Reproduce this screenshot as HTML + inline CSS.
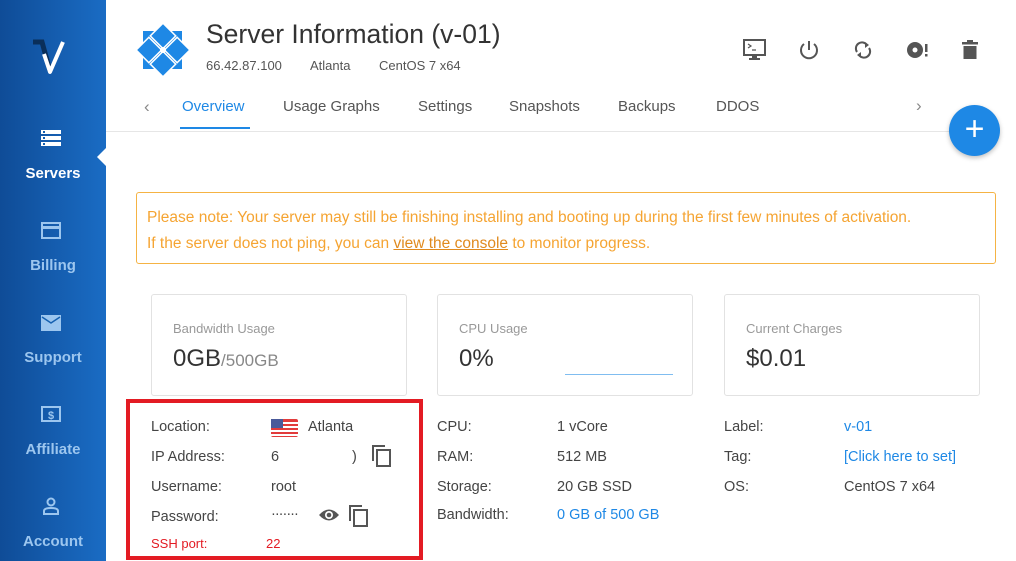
<!DOCTYPE html>
<html><head><meta charset="utf-8"><style>
*{margin:0;padding:0;box-sizing:border-box}
body{width:1016px;height:561px;overflow:hidden;background:#fff;font-family:"Liberation Sans",sans-serif;position:relative;color:#333}
.sb{position:absolute;left:0;top:0;width:106px;height:561px;background:linear-gradient(90deg,#0f4c97,#1a6cc4)}
.nav{position:absolute;left:0;width:106px;text-align:center;font-weight:bold;font-size:15px;color:#9cc6ef}
.a{position:absolute;white-space:nowrap}
.tab{position:absolute;top:98px;font-size:15px;color:#555}
.card{position:absolute;top:294px;width:256px;height:102px;border:1px solid #e2e2e2;border-radius:3px}
.card .l{position:absolute;left:21px;top:26px;font-size:13px;color:#999}
.card .v{position:absolute;left:21px;top:50px;font-size:24px;color:#333}
.lb{position:absolute;font-size:14.5px;color:#444}
.bl{color:#1e88e5}
</style></head><body>
<div class="sb"></div>
<svg class="a" style="left:30px;top:38px" width="44" height="40" viewBox="0 0 44 40"><path d="M3 4 L12 4 L20 33" fill="none" stroke="#0a2f5a" stroke-width="5"/><path d="M14 16 L20 34 L33 4" fill="none" stroke="#fff" stroke-width="4" stroke-linejoin="round"/></svg>
<svg class="a" style="left:41px;top:130px" width="20" height="17"><rect x="0" y="0" width="20" height="4" fill="#fff"/><rect x="0" y="6" width="20" height="4" fill="#fff"/><rect x="0" y="12" width="20" height="4" fill="#fff"/><rect x="2" y="1" width="2" height="2" fill="#1560b0"/><rect x="2" y="7" width="2" height="2" fill="#1560b0"/><rect x="2" y="13" width="2" height="2" fill="#1560b0"/></svg>
<div class="nav" style="top:165px;color:#fff">Servers</div>
<div class="a" style="left:97px;top:148px;width:0;height:0;border-top:9px solid transparent;border-bottom:9px solid transparent;border-right:9px solid #fff"></div>
<svg class="a" style="left:41px;top:222px" width="20" height="17"><rect x="1" y="1" width="18" height="15" fill="none" stroke="#9cc6ef" stroke-width="2"/><rect x="1" y="4" width="18" height="3" fill="#9cc6ef"/></svg>
<div class="nav" style="top:257px">Billing</div>
<svg class="a" style="left:41px;top:315px" width="20" height="16"><rect width="20" height="16" fill="#9cc6ef"/><path d="M1 2 L10 8 L19 2" fill="none" stroke="#1560b0" stroke-width="1.5"/></svg>
<div class="nav" style="top:349px">Support</div>
<svg class="a" style="left:41px;top:406px" width="20" height="16"><rect x="1" y="1" width="18" height="14" fill="none" stroke="#9cc6ef" stroke-width="2"/><text x="10" y="13" font-size="11" font-weight="bold" text-anchor="middle" fill="#9cc6ef" font-family="Liberation Sans">$</text></svg>
<div class="nav" style="top:441px">Affiliate</div>
<svg class="a" style="left:42px;top:497px" width="18" height="18"><circle cx="9" cy="5" r="3.5" fill="none" stroke="#9cc6ef" stroke-width="2"/><path d="M2 17 V14 Q2 11 9 11 Q16 11 16 14 V17 Z" fill="none" stroke="#9cc6ef" stroke-width="2"/></svg>
<div class="nav" style="top:533px">Account</div>

<svg class="a" style="left:136px;top:23px" width="54" height="54" viewBox="0 0 54 54"><rect x="7" y="8" width="39" height="38" fill="#1e88e5"/><g transform="rotate(45 27 27)" stroke="#fff" stroke-width="1.5" fill="#1e88e5"><rect x="8" y="8" width="18" height="18"/><rect x="28" y="8" width="18" height="18"/><rect x="8" y="28" width="18" height="18"/><rect x="28" y="28" width="18" height="18"/></g><circle cx="27" cy="27" r="3" fill="#fff"/></svg>
<div class="a" style="left:206px;top:19px;font-size:26.5px;color:#333">Server Information (v-01)</div>
<div class="a" style="left:206px;top:58px;font-size:13px;color:#555">66.42.87.100</div>
<div class="a" style="left:310px;top:58px;font-size:13px;color:#555">Atlanta</div>
<div class="a" style="left:379px;top:58px;font-size:13px;color:#555">CentOS 7 x64</div>

<svg class="a" style="left:742px;top:38px" width="26" height="24"><rect x="2" y="2" width="21" height="15" fill="none" stroke="#555" stroke-width="2"/><path d="M6 6 L9 8 L6 10 M10 12 H14" stroke="#555" stroke-width="1.2" fill="none"/><rect x="10" y="17" width="5" height="3" fill="#555"/><rect x="7" y="20" width="11" height="2" fill="#555"/></svg>
<svg class="a" style="left:797px;top:38px" width="24" height="24"><path d="M7 6 A8 8 0 1 0 17 6" fill="none" stroke="#555" stroke-width="2"/><path d="M12 3 V12" stroke="#555" stroke-width="2"/></svg>
<svg class="a" style="left:851px;top:38px" width="24" height="24"><path d="M6 14 A6 6 0 0 1 16 7 M18 10 A6 6 0 0 1 8 17" fill="none" stroke="#555" stroke-width="2"/><path d="M14 4 L18 7 L14 10Z M10 14 L6 17 L10 20Z" fill="#555"/></svg>
<svg class="a" style="left:905px;top:38px" width="24" height="24"><circle cx="10" cy="12" r="8" fill="#555"/><circle cx="10" cy="12" r="2.5" fill="#fff"/><rect x="20" y="6" width="2.5" height="8" fill="#555"/><rect x="20" y="16" width="2.5" height="2.5" fill="#555"/></svg>
<svg class="a" style="left:958px;top:38px" width="24" height="24"><rect x="4" y="4" width="16" height="2.5" fill="#555"/><rect x="9" y="2" width="6" height="2" fill="#555"/><path d="M5.5 8 H18.5 V21 H5.5Z" fill="#555"/></svg>

<div class="a" style="left:144px;top:97px;font-size:17px;color:#888">‹</div>
<div class="tab" style="left:182px;color:#1e88e5">Overview</div>
<div class="a" style="left:180px;top:127px;width:70px;height:2px;background:#1e88e5"></div>
<div class="tab" style="left:283px">Usage Graphs</div>
<div class="tab" style="left:418px">Settings</div>
<div class="tab" style="left:509px">Snapshots</div>
<div class="tab" style="left:618px">Backups</div>
<div class="tab" style="left:716px">DDOS</div>
<div class="a" style="left:916px;top:96px;font-size:17px;color:#888">›</div>
<div class="a" style="left:106px;top:131px;width:845px;height:1px;background:#e6e6e6"></div>
<div class="a" style="left:949px;top:105px;width:51px;height:51px;border-radius:50%;background:#1e88e5;box-shadow:0 2px 5px rgba(0,0,0,.25);color:#fff;font-size:34px;line-height:49px;text-align:center">+</div>

<div class="a" style="left:136px;top:192px;width:860px;height:72px;border:1px solid #f5b344;border-radius:3px;font-size:15.5px;color:#f5a432;padding:12px 10px;line-height:26px">Please note: Your server may still be finishing installing and booting up during the first few minutes of activation.<br>If the server does not ping, you can <span style="color:#e08a1e;text-decoration:underline">view the console</span> to monitor progress.</div>

<div class="card" style="left:151px"><div class="l">Bandwidth Usage</div><div class="v">0GB<span style="font-size:17px;color:#888">/500GB</span></div></div>
<div class="card" style="left:437px"><div class="l">CPU Usage</div><div class="v">0%</div><div class="a" style="left:127px;top:79px;width:108px;height:1px;background:#80bdf0"></div></div>
<div class="card" style="left:724px"><div class="l">Current Charges</div><div class="v">$0.01</div></div>

<div class="a" style="left:126px;top:399px;width:297px;height:161px;border:4px solid #e31b23"></div>
<div class="lb" style="left:151px;top:419px">Location:</div>
<svg class="a" style="left:271px;top:419px" width="27" height="18"><rect width="27" height="18" rx="2" fill="#e23b3b"/><rect y="3" width="27" height="2" fill="#fff"/><rect y="7" width="27" height="2" fill="#fff"/><rect y="11" width="27" height="2" fill="#fff"/><rect y="15" width="27" height="2" fill="#fff"/><rect width="12" height="9" fill="#4a5a9a"/></svg>
<div class="lb" style="left:308px;top:419px">Atlanta</div>
<div class="lb" style="left:151px;top:449px">IP Address:</div>
<div class="lb" style="left:271px;top:449px">6</div><div class="lb" style="left:352px;top:449px">)</div>
<svg class="a" style="left:371px;top:444px" width="22" height="24"><path d="M2 17 V2 H14" fill="none" stroke="#555" stroke-width="2"/><rect x="6" y="6" width="13" height="16" fill="none" stroke="#555" stroke-width="2"/></svg>
<div class="lb" style="left:151px;top:479px">Username:</div>
<div class="lb" style="left:271px;top:479px">root</div>
<div class="lb" style="left:151px;top:509px">Password:</div>
<div class="lb" style="left:271px;top:506px;letter-spacing:-1px">·······</div>
<svg class="a" style="left:318px;top:507px" width="22" height="16"><path d="M1 8 Q11 -3 21 8 Q11 19 1 8Z" fill="#555"/><circle cx="11" cy="8" r="4" fill="#fff"/><circle cx="11" cy="8" r="2.3" fill="#555"/></svg>
<svg class="a" style="left:348px;top:504px" width="22" height="24"><path d="M2 17 V2 H14" fill="none" stroke="#555" stroke-width="2"/><rect x="6" y="6" width="13" height="16" fill="none" stroke="#555" stroke-width="2"/></svg>
<div class="a" style="left:151px;top:536px;font-size:13px;color:#e31b23">SSH port:</div>
<div class="a" style="left:266px;top:536px;font-size:13px;color:#e31b23">22</div>

<div class="lb" style="left:437px;top:419px">CPU:</div><div class="lb" style="left:557px;top:419px">1 vCore</div>
<div class="lb" style="left:437px;top:449px">RAM:</div><div class="lb" style="left:557px;top:449px">512 MB</div>
<div class="lb" style="left:437px;top:479px">Storage:</div><div class="lb" style="left:557px;top:479px">20 GB SSD</div>
<div class="lb" style="left:437px;top:507px">Bandwidth:</div><div class="lb bl" style="left:557px;top:507px">0 GB of 500 GB</div>
<div class="lb" style="left:724px;top:419px">Label:</div><div class="lb bl" style="left:844px;top:419px">v-01</div>
<div class="lb" style="left:724px;top:449px">Tag:</div><div class="lb bl" style="left:844px;top:449px">[Click here to set]</div>
<div class="lb" style="left:724px;top:479px">OS:</div><div class="lb" style="left:844px;top:479px">CentOS 7 x64</div>
</body></html>
